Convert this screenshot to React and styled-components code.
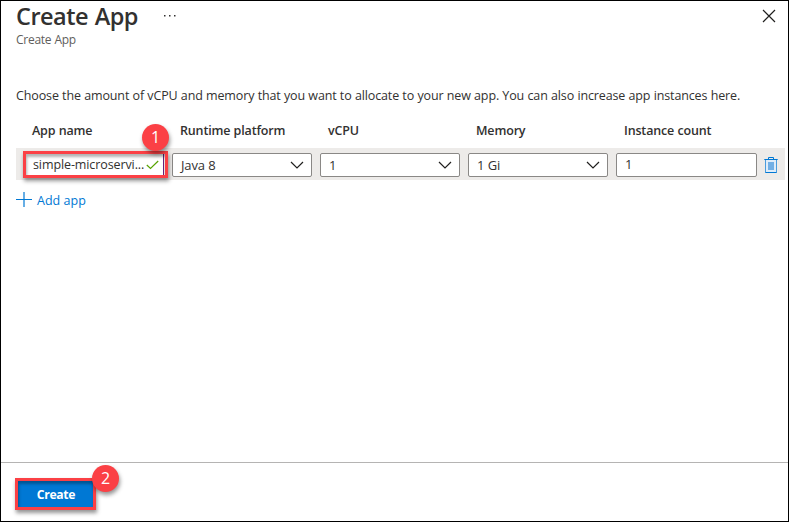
import React from 'react';
import styled, { createGlobalStyle } from 'styled-components';

const GlobalStyle = createGlobalStyle`
  *, *::before, *::after { box-sizing: border-box; }
  body { margin: 0; background: #fff; font-family: 'Open Sans', 'Segoe UI', sans-serif; }
  svg { display: block; }
`;

const Page = styled.div`
  width: 789px;
  height: 522px;
  border: 1px solid #000;
  background: #fff;
  color: #323130;
  font-size: 12.5px;
  line-height: 18px;
  letter-spacing: -0.13px;
  word-spacing: 0.2px;
  white-space: nowrap;
  overflow: hidden;
  display: flex;
  flex-direction: column;
`;

const Header = styled.header`
  height: 86px;
  padding-left: 15px;
  padding-right: 12px;
  display: flex;
  align-items: flex-start;
`;

const Titles = styled.div`
  width: 147px;
`;

const Title = styled.h1`
  margin: 0;
  font-size: 23.5px;
  line-height: 30px;
  font-weight: 600;
  letter-spacing: -0.5px;
  word-spacing: 1px;
`;

const Subtitle = styled.div`
  font-size: 12px;
  line-height: 18px;
  letter-spacing: -0.26px;
  color: #605e5c;
`;

const MoreButton = styled.button`
  border: 0;
  padding: 0;
  margin-top: 13px;
  background: none;
`;

const CloseButton = styled(MoreButton)`
  margin-top: 8px;
  margin-left: auto;
`;

const Main = styled.main`
  flex: 1;
  padding: 0 3px 0 15px;
`;

const Intro = styled.p`
  margin: 0 0 17px;
`;

const Labels = styled.div`
  display: grid;
  grid-template-columns: repeat(5, 148px);
  padding-left: 16px;
  height: 26px;
  font-weight: 600;
  letter-spacing: -0.16px;
`;

const AppRow = styled.div`
  display: flex;
  align-items: center;
  gap: 8px;
  height: 32px;
  padding: 1px 0 0 8px;
  background: #edebe9;
`;

const Field = styled.div`
  display: flex;
  align-items: center;
  justify-content: space-between;
  width: ${(p) => p.$width || 140}px;
  height: 24px;
  padding: 0 7px 0 8px;
  border: 1px solid #8a8886;
  border-radius: 2px;
  background: #fff;
  font-size: 13px;
`;

const CountField = styled(Field)`
  padding-bottom: 2px;
`;

const NameField = styled(Field)`
  position: relative;
  border: 0;
  border-right: 1px solid #68217a;
  border-radius: 0;
  padding: 0 4px 0 9px;
  font-size: 12.5px;
  letter-spacing: -0.1px;
`;

const Highlight = styled.div`
  position: absolute;
  inset: ${(p) => p.$inset};
  border: 3px solid #fb4045;
  box-shadow: 1px 3px 4px rgba(0, 0, 0, 0.42), inset 1px 3px 3px rgba(0, 0, 0, 0.3);
  pointer-events: none;
`;

const Badge = styled.span`
  position: absolute;
  left: ${(p) => p.$left}px;
  top: ${(p) => p.$top}px;
  width: 27px;
  height: 27px;
  border-radius: 50%;
  background: #fb4045;
  color: #fff;
  box-shadow: 1px 3px 4px rgba(0, 0, 0, 0.42);
  font-size: 16px;
  font-weight: 400;
  line-height: 26px;
  letter-spacing: 0;
  text-align: center;
`;

const DeleteButton = styled(MoreButton)`
  margin: 2px 0 0 -1px;
`;

const AddButton = styled.button`
  display: flex;
  align-items: flex-start;
  gap: 5px;
  margin-top: 12px;
  padding: 0;
  border: 0;
  background: none;
  color: #0078d4;
  font: inherit;
  letter-spacing: 0.03px;
`;

const Footer = styled.footer`
  height: 59px;
  padding: 18px 17px 0;
  border-top: 1px solid #b5b4b3;
`;

const CreateButton = styled.button`
  position: relative;
  display: block;
  width: 75px;
  height: 26px;
  padding: 1px 0 0 1px;
  border: 0;
  background: #0078d4;
  color: #fff;
  font: 700 12.2px/25px 'Open Sans', sans-serif;
  letter-spacing: -0.35px;
`;

const Chevron = () => (
  <svg width="14" height="8" viewBox="0 0 14 8" fill="none" stroke="#201f1e" strokeWidth="1.2">
    <path d="M1 1L7 7L13 1" />
  </svg>
);

const Trash = () => (
  <svg width="14" height="17" viewBox="0 0 14 17" fill="none">
    <path d="M1.500 2.500V15.500H12.500V2.500" fill="#deecf9" stroke="#4a9cdd" />
    <path d="M4 5H10V13H4Z" fill="#71afe5" />
    <path d="M4.500 2V.5H9.500V2M.3 2.500H13.700M1.500 15.500H12.500" stroke="#0078d4" />
  </svg>
);

const selects = ['Java 8', '1', '1 Gi'];
const labels = ['App name', 'Runtime platform', 'vCPU', 'Memory', 'Instance count'];

export default function App() {
  return (
    <Page>
      <GlobalStyle />
      <Header>
        <Titles>
          <Title>Create App</Title>
          <Subtitle>Create App</Subtitle>
        </Titles>
        <MoreButton aria-label="More">
          <svg width="13" height="4" viewBox="0 0 13 4" fill="#323130">
            <path d="M1 1h1.500v1.500H1zM6 1h1.500v1.500H6zM11 1h1.500v1.500H11z" />
          </svg>
        </MoreButton>
        <CloseButton aria-label="Close">
          <svg width="14" height="14" viewBox="0 0 14 14" stroke="#201f1e" strokeWidth="1.2">
            <path d="M1 1L13 13M13 1L1 13" />
          </svg>
        </CloseButton>
      </Header>
      <Main>
        <Intro>
          Choose the amount of vCPU and memory that you want to allocate to your new app. You can also increase app instances here.
        </Intro>
        <Labels>
          {labels.map((label) => <span key={label}>{label}</span>)}
        </Labels>
        <AppRow>
          <NameField>
            <span>simple-microservi...</span>
            <svg width="13" height="10" viewBox="0 0 13 10" fill="none" stroke="#57a300" strokeWidth="1.2">
              <path d="M.8 5L4.500 8.500L12.200 1" />
            </svg>
            <Highlight $inset="-2px -5px -1px -1px" />
            <Badge $left={118} $top={-29}>1</Badge>
          </NameField>
          {selects.map((value) => (
            <Field key={value}>
              <span>{value}</span>
              <Chevron />
            </Field>
          ))}
          <CountField $width={141}>1</CountField>
          <DeleteButton aria-label="Delete app"><Trash /></DeleteButton>
        </AppRow>
        <AddButton>
          <svg width="16" height="15" viewBox="0 0 16 15" stroke="#0078d4">
            <path d="M8 0V15" strokeWidth="1.200" />
            <path d="M0 7.500H16" />
          </svg>
          Add app
        </AddButton>
      </Main>
      <Footer>
        <CreateButton>
          Create
          <Highlight $inset="-3px" />
          <Badge $left={74} $top={-16}>2</Badge>
        </CreateButton>
      </Footer>
    </Page>
  );
}
